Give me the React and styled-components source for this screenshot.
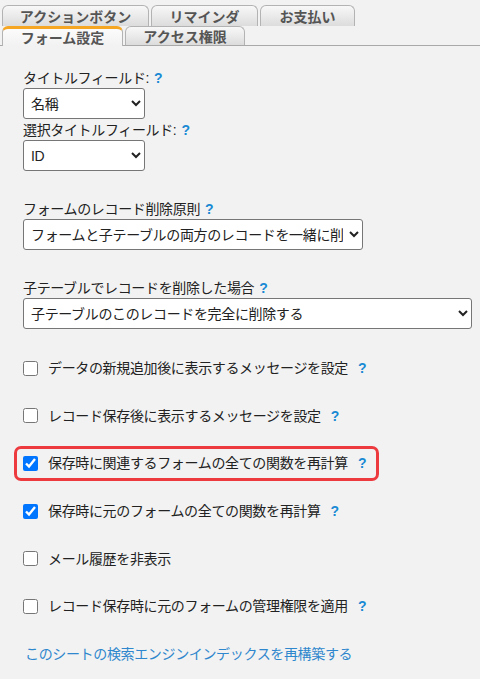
import styled, { createGlobalStyle } from "styled-components";

const GlobalStyle = createGlobalStyle`
  html, body {
    margin: 0;
    padding: 0;
    background: #f2f2f2;
  }
  body {
    font-family: "Liberation Sans", "Noto Sans CJK JP", sans-serif;
    font-size: 14px;
    letter-spacing: -0.35px;
    color: #222;
  }
`;

const Page = styled.div`
  width: 480px;
  min-height: 679px;
  background: #f2f2f2;
`;

const TabBar = styled.div`
  padding-top: 5px;
`;

const TabRow = styled.div`
  display: flex;
  gap: 2px;
  padding-left: 2px;
  border-bottom: ${(p) => (p.$bottom ? "1px solid #a9a9a9" : "none")};
  height: ${(p) => p.$height}px;
`;

const Tab = styled.div`
  box-sizing: border-box;
  width: ${(p) => p.$width}px;
  height: ${(p) => (p.$active ? "calc(100% + 1px)" : "100%")};
  display: flex;
  align-items: center;
  justify-content: center;
  border: 1px solid #b3b3b3;
  border-top: ${(p) => (p.$active ? "3px solid #f5a623" : "1px solid #b3b3b3")};
  border-bottom: none;
  border-radius: 6px 6px 0 0;
  background: ${(p) =>
    p.$active
      ? "linear-gradient(#fbfbfb, #f2f2f2)"
      : "linear-gradient(#f8f8f8, #dcdcdc)"};
  font-weight: bold;
  font-size: 14px;
  letter-spacing: 0;
  color: #555;
  line-height: 1;
  padding-top: ${(p) => (p.$active ? "0" : "1px")};
`;

const Content = styled.div`
  padding-left: 23px;
  padding-top: 22px;
`;

const Field = styled.div`
  margin-top: ${(p) => p.$top}px;
`;

const Label = styled.div`
  line-height: 20px;
  height: 20px;
  white-space: nowrap;
`;

const Help = styled.span`
  color: #1a8ad4;
  font-weight: bold;
  letter-spacing: 0;
  margin-left: ${(p) => p.$gap || 5}px;
`;

const Select = styled.select`
  box-sizing: border-box;
  display: block;
  width: ${(p) => p.$width}px;
  height: 31px;
  font-family: "Liberation Sans", "Noto Sans CJK JP", sans-serif;
  font-size: 14px;
  letter-spacing: -0.35px;
  color: #222;
  background: #fff;
  border: 1px solid #767676;
  border-radius: 3px;
  padding: 0 3px;
`;

const CheckList = styled.div`
  margin-top: 29px;
  display: flex;
  flex-direction: column;
  gap: 27.7px;
`;

const CheckRow = styled.label`
  display: flex;
  align-items: center;
  width: fit-content;
  height: 20px;
  line-height: 20px;
  white-space: nowrap;
  ${(p) =>
    p.$highlight &&
    `
    border: 3px solid #ec3a3f;
    border-radius: 7px;
    padding: 4px 10px 5px 6px;
    margin: -7px 0 -8px -9px;
  `}
`;

const Box = styled.input.attrs({ type: "checkbox" })`
  width: 15px;
  height: 15px;
  margin: 0 10px 0 0;
  accent-color: #0075ff;
`;

const Link = styled.a`
  display: block;
  margin-top: 28px;
  margin-left: 2px;
  line-height: 20px;
  color: #2f87cd;
  text-decoration: none;
`;

const checks = [
  { text: "データの新規追加後に表示するメッセージを設定", help: true },
  { text: "レコード保存後に表示するメッセージを設定", help: true },
  { text: "保存時に関連するフォームの全ての関数を再計算", help: true, checked: true, highlight: true },
  { text: "保存時に元のフォームの全ての関数を再計算", help: true, checked: true },
  { text: "メール履歴を非表示" },
  { text: "レコード保存時に元のフォームの管理権限を適用", help: true },
];

export default function App() {
  return (
    <Page>
      <GlobalStyle />
      <TabBar>
        <TabRow $height={21}>
          <Tab $width={147}>アクションボタン</Tab>
          <Tab $width={107}>リマインダ</Tab>
          <Tab $width={95}>お支払い</Tab>
        </TabRow>
        <TabRow $height={19} $bottom>
          <Tab $width={121} $active>フォーム設定</Tab>
          <Tab $width={120}>アクセス権限</Tab>
        </TabRow>
      </TabBar>
      <Content>
        <Field $top={0}>
          <Label>
            タイトルフィールド:<Help>?</Help>
          </Label>
          <Select $width={122} defaultValue="name">
            <option value="name">名稱</option>
          </Select>
        </Field>
        <Field $top={1}>
          <Label>
            選択タイトルフィールド:<Help>?</Help>
          </Label>
          <Select $width={122} defaultValue="id">
            <option value="id">ID</option>
          </Select>
        </Field>
        <Field $top={28}>
          <Label>
            フォームのレコード削除原則<Help>?</Help>
          </Label>
          <Select $width={340}>
            <option>フォームと子テーブルの両方のレコードを一緒に削除する</option>
          </Select>
        </Field>
        <Field $top={28}>
          <Label>
            子テーブルでレコードを削除した場合<Help>?</Help>
          </Label>
          <Select $width={449}>
            <option>子テーブルのこのレコードを完全に削除する</option>
          </Select>
        </Field>
        <CheckList>
          {checks.map((c) => (
            <CheckRow key={c.text} $highlight={c.highlight}>
              <Box defaultChecked={c.checked} />
              {c.text}
              {c.help && <Help $gap={10}>?</Help>}
            </CheckRow>
          ))}
        </CheckList>
        <Link href="#">このシートの検索エンジンインデックスを再構築する</Link>
      </Content>
    </Page>
  );
}
